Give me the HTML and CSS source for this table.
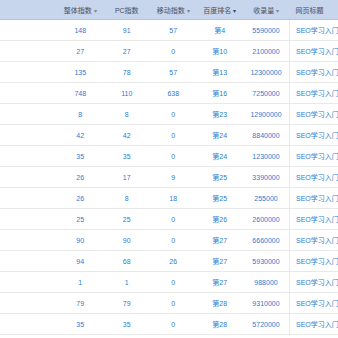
FILE: index.html
```html
<!DOCTYPE html>
<html lang="zh">
  <head>
    <meta charset="utf-8" />
    <meta name="viewport" content="width=device-width, initial-scale=1.0" />
    <title>关键词列表</title>
    <link rel="stylesheet" href="styles.css">
  </head>

  <body>
    <table class="kw-table">
      <colgroup>
        <col class="col-key" />
        <col class="col-num" />
        <col class="col-num" />
        <col class="col-num" />
        <col class="col-num" />
        <col class="col-num" />
        <col />
      </colgroup>
      <thead>
        <tr>
          <th></th>
          <th>整体指数<span class="sort">▾</span></th>
          <th>PC指数</th>
          <th>移动指数<span class="sort">▾</span></th>
          <th>百度排名<span class="sort dark">▾</span></th>
          <th>收录量<span class="sort">▾</span></th>
          <th class="left">网页标题</th>
        </tr>
      </thead>
      <tbody>
        <tr><td></td><td>148</td><td>91</td><td>57</td><td>第4</td><td>5590000</td><td class="title">SEO学习入门</td></tr>
        <tr><td></td><td>27</td><td>27</td><td>0</td><td>第10</td><td>2100000</td><td class="title">SEO学习入门</td></tr>
        <tr><td></td><td>135</td><td>78</td><td>57</td><td>第13</td><td>12300000</td><td class="title">SEO学习入门</td></tr>
        <tr><td></td><td>748</td><td>110</td><td>638</td><td>第16</td><td>7250000</td><td class="title">SEO学习入门</td></tr>
        <tr><td></td><td>8</td><td>8</td><td>0</td><td>第23</td><td>12900000</td><td class="title">SEO学习入门</td></tr>
        <tr><td></td><td>42</td><td>42</td><td>0</td><td>第24</td><td>8840000</td><td class="title">SEO学习入门</td></tr>
        <tr><td></td><td>35</td><td>35</td><td>0</td><td>第24</td><td>1230000</td><td class="title">SEO学习入门</td></tr>
        <tr><td></td><td>26</td><td>17</td><td>9</td><td>第25</td><td>3390000</td><td class="title">SEO学习入门</td></tr>
        <tr><td></td><td>26</td><td>8</td><td>18</td><td>第25</td><td>255000</td><td class="title">SEO学习入门</td></tr>
        <tr><td></td><td>25</td><td>25</td><td>0</td><td>第26</td><td>2600000</td><td class="title">SEO学习入门</td></tr>
        <tr><td></td><td>90</td><td>90</td><td>0</td><td>第27</td><td>6660000</td><td class="title">SEO学习入门</td></tr>
        <tr><td></td><td>94</td><td>68</td><td>26</td><td>第27</td><td>5930000</td><td class="title">SEO学习入门</td></tr>
        <tr><td></td><td>1</td><td>1</td><td>0</td><td>第27</td><td>988000</td><td class="title">SEO学习入门</td></tr>
        <tr><td></td><td>79</td><td>79</td><td>0</td><td>第28</td><td>9310000</td><td class="title">SEO学习入门</td></tr>
        <tr><td></td><td>35</td><td>35</td><td>0</td><td>第28</td><td>5720000</td><td class="title">SEO学习入门</td></tr>
      </tbody>
    </table>
  </body>
</html>
```

FILE: styles.css
```css
body {
  margin: 0;
  overflow: hidden;
  background-color: #fff;
  font-family: "Liberation Sans", "Noto Sans CJK SC", sans-serif;
}

.kw-table {
  border-collapse: collapse;
  table-layout: fixed;
  width: 338px;
  font-size: 7px;
}

.col-key {
  width: 57px;
}

.col-num {
  width: 46.5px;
}

.kw-table th {
  height: 19px;
  padding: 0;
  background-color: #c7d5ed;
  border-bottom: 1px solid #b3c3e2;
  color: #4a4f5a;
  font-weight: normal;
  text-align: center;
  white-space: nowrap;
}

.kw-table th.left {
  text-align: left;
  padding-left: 6px;
}

.sort {
  margin-left: 2px;
  font-size: 6px;
  color: #7d8594;
}

.sort.dark {
  color: #3f4656;
}

.kw-table td {
  height: 20px;
  padding: 0;
  border-bottom: 1px solid #e9e9ea;
  color: #2e7bd1;
  text-align: center;
  white-space: nowrap;
}

.kw-table td.title {
  text-align: left;
  padding-left: 6px;
  border-left: 1px solid #e4eaf2;
  overflow: hidden;
}
```
